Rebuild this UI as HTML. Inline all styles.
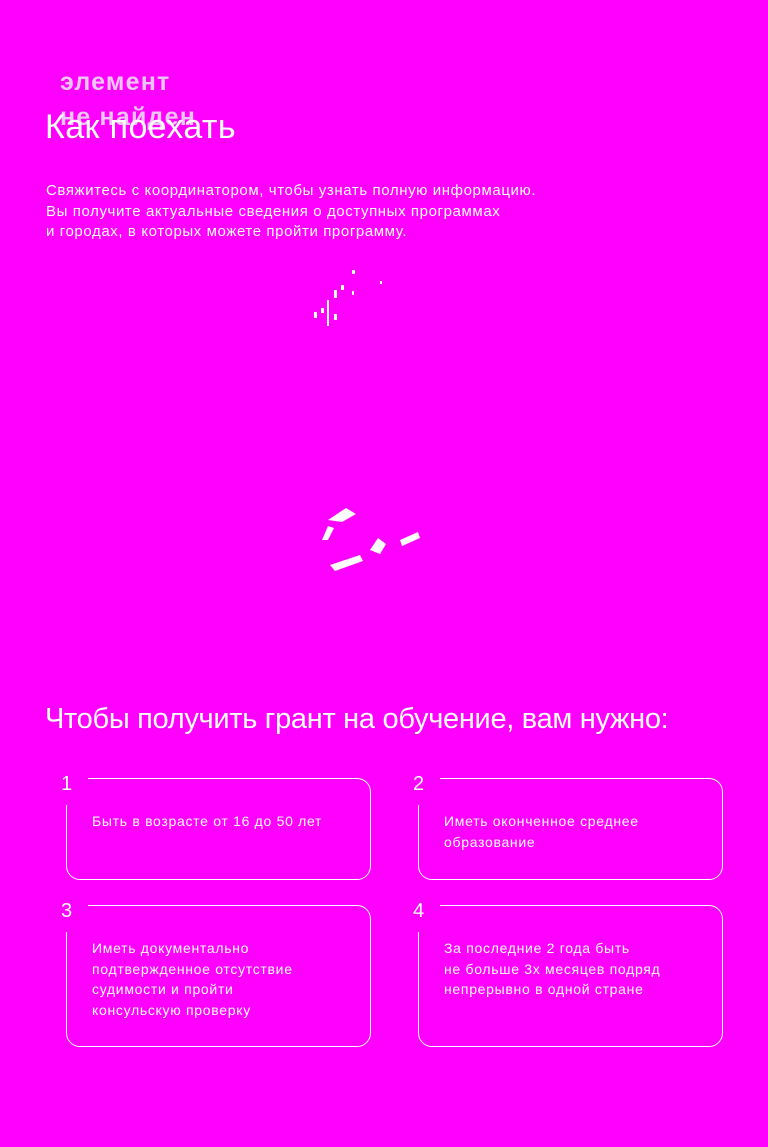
<!DOCTYPE html>
<html><head><meta charset="utf-8"><style>
*{margin:0;padding:0;box-sizing:border-box}
body{width:768px;height:1147px;background:#ff00ff;color:#fff;font-family:"Liberation Sans","Noto Sans CJK SC",sans-serif;position:relative;overflow:hidden}
.a{position:absolute;white-space:nowrap}
.nf{color:#ecc6f4;font-weight:bold;font-size:25px;letter-spacing:1.2px;left:60px}
.card{position:absolute;width:305px;border:1px solid #fff;border-radius:14px}
.card .m{position:absolute;left:-3px;top:-3px;width:24px;height:29px;background:#ff00ff}
.card .n{position:absolute;left:-6px;top:-6px;font-size:20px}
.card p{position:absolute;left:25px;top:32px;font-size:14px;line-height:20.5px;letter-spacing:0.7px}
</style></head><body>
<div class="a nf" style="top:68px">элемент</div>
<div class="a nf" style="top:103px">не найден</div>
<div class="a" style="left:45px;top:108px;font-size:34px;letter-spacing:0.4px">Как поехать</div>
<div class="a" style="left:46px;top:181px;font-size:15px;line-height:20.5px;letter-spacing:0.6px">Свяжитесь с координатором, чтобы узнать полную информацию.<br>Вы получите актуальные сведения о доступных программах<br>и городах, в которых можете пройти программу.</div>
<div class="a" style="left:45px;top:703px;font-size:29px;letter-spacing:-0.3px">Чтобы получить грант на обучение, вам нужно:</div>

<div class="card" style="left:66px;top:778px;height:102px"><div class="m"></div><div class="n">1</div><p>Быть в возрасте от 16 до 50 лет</p></div>
<div class="card" style="left:418px;top:778px;height:102px"><div class="m"></div><div class="n">2</div><p>Иметь оконченное среднее<br>образование</p></div>
<div class="card" style="left:66px;top:905px;height:142px"><div class="m"></div><div class="n">3</div><p>Иметь документально<br>подтвержденное отсутствие<br>судимости и пройти<br>консульскую проверку</p></div>
<div class="card" style="left:418px;top:905px;height:142px"><div class="m"></div><div class="n">4</div><p>За последние 2 года быть<br>не больше 3х месяцев подряд<br>непрерывно в одной стране</p></div>

<svg class="a" style="left:300px;top:270px" width="140" height="320" viewBox="0 0 140 320" fill="#fff">
<rect x="14" y="42" width="3" height="6"/><rect x="21" y="38" width="3" height="5"/><rect x="27" y="30" width="2" height="26"/><rect x="34" y="20" width="3" height="8"/><rect x="34" y="44" width="3" height="6"/><rect x="41" y="15" width="3" height="5"/><rect x="52" y="21" width="2" height="4"/><rect x="52" y="0" width="3" height="4"/><rect x="80" y="11" width="2" height="3"/>
<path d="M28 250 l18 -12 l10 6 l-14 8 z M22 270 l6 -14 l6 2 l-6 12z M30 295 l30 -10 l3 6 l-28 10z"/>
<path d="M70 280 l8 -12 l8 6 l-6 10z M100 270 l18 -8 l2 6 l-18 8z"/>
</svg>
</body></html>
